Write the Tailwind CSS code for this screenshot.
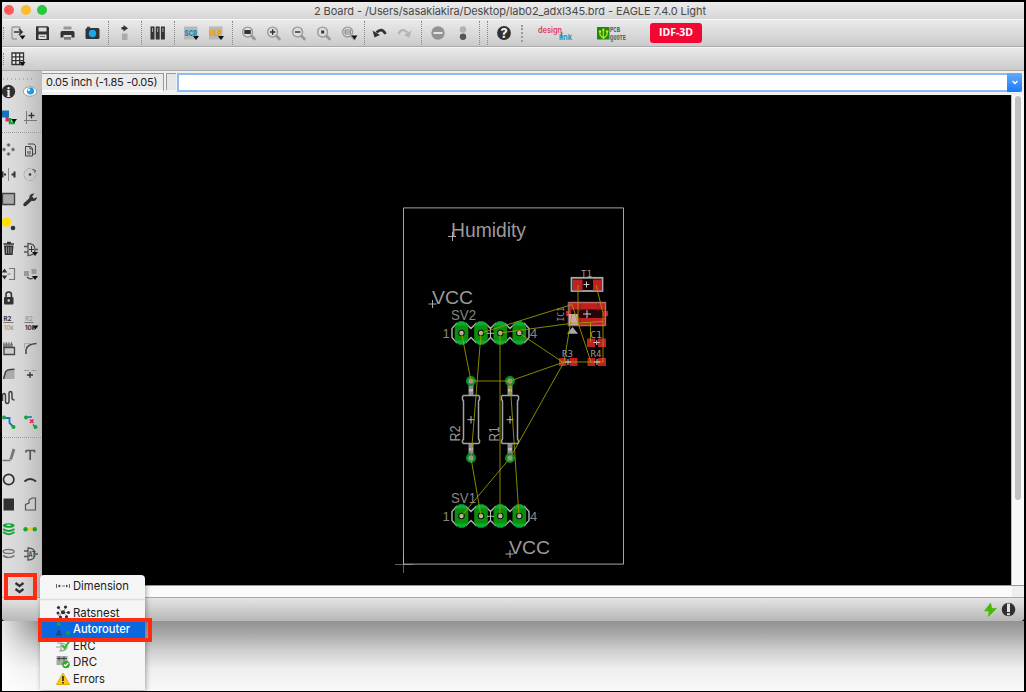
<!DOCTYPE html>
<html lang="en">
<head>
<meta charset="utf-8">
<title>2 Board - EAGLE 7.4.0 Light</title>
<script src="https://cdn.jsdelivr.net/npm/@tailwindcss/browser@4"></script>
</head>
<body class="w-[1026px] h-[692px] overflow-hidden bg-black font-['Inter',sans-serif]">
<svg class="hidden">
  <defs>
    <symbol id="lens" viewBox="0 0 16 16" overflow="visible"><circle cx="6.500" cy="6.500" r="5.300" fill="#dedede" stroke="#999" stroke-width="1.500"/><path d="M11 11l2.800 2.800" stroke="#999" stroke-width="3" stroke-linecap="round"/></symbol>
    <symbol id="arrow" viewBox="0 0 6 4" overflow="visible"><path d="M0 0h6L3 4z" fill="#111"/></symbol>
    <symbol id="pad" viewBox="-8 -12 16 24" overflow="visible"><path d="M-2.500-11.500h5L6.800-7V7L2.500 11.500h-5L-6.800 7V-7z" fill="#0b8f0b"/><path d="M-2.500-11.500h5L6.800-7.500H-6.800zM-2.500 11.500h5L6.800 7.500H-6.800z" fill="#08ad35"/><circle r="3.300" fill="#111"/><circle r="2.200" fill="#c3b8b0"/></symbol>
    <symbol id="hdr" viewBox="0 0 80 24" overflow="visible">
      <path d="M4.500 2.500h9.500l5 5 5-5h9.500l5 5 5-5H53l5 5 5-5h9.500L77 7.500v9L72.500 21.500H63l-5-5-5 5H43.500l-5-5-5 5H24l-5-5-5 5H4.500L0 16.500v-9z" fill="none" stroke="#b0b0b0" stroke-width="1.400"/>
      <use href="#pad" x="1.500" y="0" width="16" height="24"/><use href="#pad" x="21" y="0" width="16" height="24"/><use href="#pad" x="40.300" y="0" width="16" height="24"/><use href="#pad" x="59.300" y="0" width="16" height="24"/>
      <path d="M35 12.300h7M38.500 8v8" stroke="#bbb"/>
    </symbol>
    <symbol id="res" viewBox="0 0 20 90" overflow="visible">
      <path d="M10 8v12M10 69v10" stroke="#8c8c8c" stroke-width="5"/>
      <circle cx="10" cy="6" r="3.800" fill="#999" stroke="#078f25" stroke-width="2.400"/><circle cx="10" cy="83" r="3.800" fill="#999" stroke="#078f25" stroke-width="2.400"/>
      <path d="M10 14v2.500M10 73v2.500" stroke="#bbb" stroke-width="4"/>
      <path d="M2.500 20.500h15l1 1v3l-1 1.500v38l1 1.500v2l-1 1h-15l-1-1v-2l1-1.500v-38l-1-1.500v-3z" fill="none" stroke="#a2a2a2" stroke-width="1.500"/>
      <path d="M6.500 44.700h7M10 41v7.500" stroke="#bbb"/>
    </symbol>
  </defs>
</svg>

<main class="relative ml-[2px] flex h-[691px] w-[1022px] flex-col bg-black pt-[2px]">
  <header class="flex h-[17px] shrink-0 items-center bg-gradient-to-b from-[#ececec] to-[#d6d6d6] pl-[2px]">
    <div class="-mt-px flex gap-[6.500px]">
      <i class="size-[10px] rounded-full bg-[#fc5b57]"></i><i class="size-[10px] rounded-full bg-[#fdbc2e]"></i><i class="size-[10px] rounded-full bg-[#28c83f]"></i>
    </div>
    <h1 class="ml-[266px]"><svg width="398" height="16" class="block"><text x="1" y="11.500" font-size="11" textLength="392" fill="#484848">2 Board - /Users/sasakiakira/Desktop/lab02_adxl345.brd - EAGLE 7.4.0 Light</text></svg></h1>
  </header>

  <nav class="flex h-[28px] shrink-0 items-center border-t border-b border-t-[#f6f6f6] border-b-[#a9a9a9] bg-gradient-to-b from-[#eaeaea] to-[#cbcbcb]">
    <span class="ml-px mr-px h-3 w-px border-l border-dotted border-[#888]"></span>
    <svg class="w-[25px] h-4" viewBox="0 0 25 16"><path d="M15 5V3q0-1-1-1H8Q7 2 7 3v10q0 1 1 1h4" fill="none" stroke="#999" stroke-width="1.300"/><path d="M9 7h8M14 4l3 3-3 3" fill="none" stroke="#333" stroke-width="1.700"/><use href="#arrow" x="14.500" y="10.500" width="6" height="4"/></svg>
    <svg class="w-[25px] h-4" viewBox="0 0 25 16"><path d="M6 2q0-.7.700-.7h11l1.300 1.200V15H6z" fill="#333"/><path d="M8.500 2.500h8v4h-8zM8.500 9.500h8V14h-8z" fill="#ddd"/><path d="M10 11.500h5" stroke="#777"/></svg>
    <svg class="w-[25px] h-4" viewBox="0 0 25 16"><path d="M8.500 1.500h8v3h-8z" fill="#999"/><path d="M7 6h11q1.500 0 1.500 2v4.500h-3V10h-8v2.500h-3V8Q5.500 6 7 6z" fill="#333"/><path d="M9 12h7v2.700H9z" fill="#777"/></svg>
    <svg class="w-[25px] h-4" viewBox="0 0 25 16"><rect x="5.500" y="3" width="14" height="11" rx="1.500" fill="#30343a"/><path d="M7 1.700h3V4H7z" fill="#444"/><circle cx="12.500" cy="8.500" r="3.700" fill="#19a8ea"/></svg>
    <span class="mx-[3px] h-6 border-l border-dotted border-[#888]"></span>
    <svg class="w-[25px] h-4" viewBox="0 0 25 16"><path d="M10 8.500h5.500V15H10z" fill="#aaa"/><path d="M11.500 0l4.500 3.200-4.500 3.300V4.500H9.500V2h2z" fill="#333"/></svg>
    <span class="ml-[4px] mr-[3px] h-6 border-l border-dotted border-[#888]"></span>
    <svg class="w-[25px] h-4" viewBox="0 0 25 16"><g fill="#333"><rect x="5.500" y="1.500" width="4" height="13"/><rect x="10.700" y="1.500" width="4" height="13"/><rect x="15.900" y="1.500" width="4" height="13"/></g><path d="M7.500 3v4M12.700 3v4M17.900 3v4" stroke="#aaa"/></svg>
    <span class="ml-[4px] mr-[3px] h-6 border-l border-dotted border-[#888]"></span>
    <svg class="w-[25px] h-4" viewBox="0 0 25 16"><path d="M6 1.500h13.500v13H6z" fill="#b8b8b8"/><text x="6.500" y="11" font-size="8" font-weight="800" textLength="12.500" lengthAdjust="spacingAndGlyphs" fill="#1785bd">SCR</text><use href="#arrow" x="15" y="11" width="6" height="4"/></svg>
    <svg class="w-[25px] h-4" viewBox="0 0 25 16"><path d="M6 1.500h13.500v13H6z" fill="#b8b8b8"/><text x="6.500" y="11" font-size="8" font-weight="800" textLength="12.500" lengthAdjust="spacingAndGlyphs" fill="#f7960c">ULP</text><use href="#arrow" x="15" y="11" width="6" height="4"/></svg>
    <span class="ml-[4px] mr-[3px] h-6 border-l border-dotted border-[#888]"></span>
    <svg class="w-[25px] h-4" viewBox="0 0 25 16"><use href="#lens" x="5.500" y="1" width="15" height="15"/><path d="M8.300 5h6.500v4H8.300z" fill="#333"/></svg>
    <svg class="w-[25px] h-4" viewBox="0 0 25 16"><use href="#lens" x="5.500" y="1" width="15" height="15"/><path d="M9 7h5.400M11.700 4.300v5.400" stroke="#333" stroke-width="1.500"/></svg>
    <svg class="w-[25px] h-4" viewBox="0 0 25 16"><use href="#lens" x="5.500" y="1" width="15" height="15"/><path d="M9 7h5.400" stroke="#333" stroke-width="1.500"/></svg>
    <svg class="w-[25px] h-4" viewBox="0 0 25 16"><use href="#lens" x="5.500" y="1" width="15" height="15"/><path d="M10.200 5.500h3v3h-3z" fill="#333"/></svg>
    <svg class="w-[25px] h-4" viewBox="0 0 25 16"><use href="#lens" x="5.500" y="1" width="15" height="15"/><path d="M9 5h5.500v4H9zM9 7h5.500" fill="none" stroke="#888"/><use href="#arrow" x="15.500" y="10.500" width="6" height="4"/></svg>
    <span class="ml-[3px] mr-[2px] h-6 border-l border-dotted border-[#888]"></span>
    <svg class="w-[25px] h-4" viewBox="0 0 25 16"><path d="M9.500 7.500Q15 2 18.500 9" fill="none" stroke="#333" stroke-width="2.600"/><path d="M5.500 5.500l2 7 5.500-2.500z" fill="#333"/></svg>
    <svg class="w-[25px] h-4" viewBox="0 0 25 16"><path d="M15.500 7.500Q10 2 6.500 9" fill="none" stroke="#b4b4b4" stroke-width="2.300"/><path d="M19.500 5.500l-2 7L12 10z" fill="#b4b4b4"/></svg>
    <span class="ml-[4px] mr-[3px] h-6 border-l border-dotted border-[#888]"></span>
    <svg class="w-[25px] h-4" viewBox="0 0 25 16"><circle cx="13" cy="8" r="6.700" fill="#929292"/><path d="M8.500 8h9" stroke="#eee" stroke-width="1.800"/></svg>
    <svg class="w-[25px] h-4" viewBox="0 0 25 16"><circle cx="13" cy="4.500" r="3.200" fill="#b2b2b2"/><circle cx="13" cy="11.700" r="3.200" fill="#555"/></svg>
    <span class="ml-[4px] h-6 border-l border-dotted border-[#888]"></span>
    <span class="ml-[7px] mr-[3px] h-6 border-l border-dotted border-[#888]"></span>
    <svg class="w-[25px] h-4" viewBox="0 0 25 16"><circle cx="13" cy="8" r="6.900" fill="#303030"/><text x="13" y="12.500" text-anchor="middle" font-size="12.500" font-weight="800" fill="#eee">?</text></svg>
    <span class="ml-[5px] h-[17px] border-l-2 border-dotted border-[#999]"></span>
    <svg class="ml-[14px] h-5 w-[36px]" viewBox="0 0 36 20"><text x="1" y="9.500" font-size="8.500" font-weight="600" textLength="24" lengthAdjust="spacingAndGlyphs" fill="#df3d62">design</text><text x="22" y="17" font-size="7.500" font-weight="700" textLength="13" lengthAdjust="spacingAndGlyphs" fill="#2a95bd">link</text><path d="M24.500 9v6" stroke="#df3d62" stroke-width="1.200"/></svg>
    <svg class="ml-[23px] h-5 w-[31px]" viewBox="0 0 31 20"><rect x="1" y="4" width="12.500" height="12.500" fill="#178c12"/><path d="M7.300 7v9M4 8v4l3 3M11 8v4l-3 3" fill="none" stroke="#c6e010" stroke-width="1.200"/><circle cx="4" cy="8.500" r="1.300" fill="#c6e010"/><circle cx="7.300" cy="6.800" r="1.300" fill="#c6e010"/><circle cx="11" cy="8.500" r="1.300" fill="#c6e010"/><text x="14" y="9" font-size="6.500" font-family="Liberation Mono" font-weight="700" textLength="10" lengthAdjust="spacingAndGlyphs" fill="#555">PCB</text><text x="14" y="16.500" font-size="6.500" font-family="Liberation Mono" font-weight="700" textLength="16" lengthAdjust="spacingAndGlyphs" fill="#555">QUOTE</text></svg>
    <div class="ml-[23px] flex h-5 w-[52px] items-center justify-center rounded-[3px] bg-[#f20832] font-['Open_Sans',sans-serif] text-[10.500px] font-bold text-white">IDF-3D</div>
  </nav>

  <div class="flex h-[24px] shrink-0 items-center border-t border-b border-t-[#f6f6f6] border-b-[#aaa] bg-gradient-to-b from-[#eaeaea] to-[#cbcbcb]">
    <span class="ml-px mr-[6px] h-3 w-px border-l border-dotted border-[#888]"></span>
    <svg class="h-4 w-5" viewBox="0 0 20 16"><path d="M2 2h11.500v11.500H2zM5.800 2v11.500M9.700 2v11.500M2 5.800h11.500M2 9.700h11.500" fill="#eee" stroke="#333" stroke-width="1.300"/><use href="#arrow" x="9.500" y="11" width="6" height="4"/></svg>
  </div>

  <div class="flex h-[526px] shrink-0">
    <aside class="flex w-10 shrink-0 flex-col overflow-hidden bg-gradient-to-r from-[#dedede] via-[#d6d6d6] to-[#bdbdbd]">
      <svg width="40" height="526" viewBox="2 71 40 526" fill="none">
        <path d="M3 79h32" stroke="#888" stroke-dasharray="1 3"/>
        <circle cx="8.500" cy="91.500" r="6.700" fill="#303030"/><text x="8.500" y="96.500" text-anchor="middle" font-family="Liberation Serif" font-size="14" font-weight="700" fill="#eee">i</text>
        <ellipse cx="30" cy="91.500" rx="6.600" ry="4.700" fill="#fff" stroke="#999"/><circle cx="30.500" cy="91" r="3.600" fill="#159ee0"/><circle cx="28.800" cy="89.700" r="1.300" fill="#fff"/>
        <path d="M7 115v5h4" stroke="#eb2050" stroke-width="3"/><path d="M10 118v5h5" stroke="#15a33c" stroke-width="2.500"/><path d="M2 110.500h7v7H2z" fill="#1771bd"/><use href="#arrow" x="11" y="119" width="6" height="4"/>
        <path d="M26.500 111v13M24 120.500h13" stroke="#777"/><path d="M31.500 112.500v6M28.500 115.500h6" stroke="#333" stroke-width="1.300"/>
        <path d="M2 132.500h39M2 437.500h39" stroke="#999" stroke-dasharray="1 1"/>
        <path d="M8.500 143.500v3M8.500 152.500v3M2.500 149.500h3M11.500 149.500h3" stroke="#555" stroke-width="2"/><path d="M6.500 145h4M6.500 154h4M4 147.500v4M13 147.500v4" stroke="#666" stroke-width=".9"/>
        <path d="M28 144h6l1.500 1.500V154H33" stroke="#444"/><path d="M25.500 146.500h5l2 2v7.500h-7z" stroke="#444"/><path d="M27 151h4v3.500h-4z" fill="#888"/><path d="M30 146.500v2.500h2.500" stroke="#444"/>
        <path d="M8.500 168v13" stroke="#888"/><path d="M2.500 171.500v6M4 174.500h2M14.500 171.500v6M11.500 174.500h2" stroke="#333" stroke-width="2"/>
        <circle cx="30" cy="174.500" r="6" stroke="#aaa" stroke-dasharray="5 1"/><circle cx="30" cy="174.500" r="1.300" fill="#333"/><path d="M32.500 169.500l3 1-1 2" stroke="#444"/>
        <path d="M2.500 193.500h12v11h-12z" fill="#aaa" stroke="#444" stroke-width="1.400"/>
        <path d="M25 204.500l6-5.500" stroke="#333" stroke-width="3.500" stroke-linecap="round"/><path d="M34.500 193.500q-4-.5-5 2.500-1 4 3 5 4 .5 4.500-4l-3 1.500-2-2z" fill="#333"/>
        <circle cx="6.500" cy="222" r="4.800" fill="#ffe000"/><circle cx="13" cy="228" r="2.300" fill="#333"/>
        <path d="M4 245.500h9.500l-.8 9.500H4.800z" fill="#333"/><path d="M3.500 244h10.500M7 242.500h4" stroke="#333" stroke-width="1.500"/><path d="M6.500 247v6.500M8.700 247v6.500M11 247v6.500" stroke="#aaa" stroke-width=".8"/>
        <g id="gate"><path d="M28 243.500v12q7 0 7-6t-7-6zM24 246.500h4M24 252h4M35 249.500h3" stroke="#555" stroke-width="1.300"/></g><path d="M31.500 246v6M29 249.500h5" stroke="#333"/><use href="#arrow" x="32" y="252" width="6" height="4"/>
        <path d="M4.500 268.500l2.800 4H1.700zM4.500 279.500l2.800-4H1.700z" fill="#333"/><path d="M9 268.500h5.500v11H9" stroke="#777" stroke-width="1.200"/><path d="M7.500 274h3" stroke="#777"/>
        <path d="M24 271h5v5h-5zM31.500 269h5v5h-5z" fill="#999"/><path d="M27 277q3 3 6 1" stroke="#444" stroke-width="1.200"/><use href="#arrow" x="32" y="276" width="6" height="4"/>
        <rect x="4" y="297" width="9.500" height="7.500" rx="1" fill="#333"/><path d="M6 297v-2.500q0-2.500 2.700-2.500t2.700 2.500v2.500" stroke="#333" stroke-width="1.600"/><circle cx="8.700" cy="300.500" r="1.200" fill="#ddd"/>
        <g font-size="6.500" font-weight="700"><text x="3.500" y="320.500" textLength="8" lengthAdjust="spacingAndGlyphs" fill="#333">R2</text><text x="3.500" y="329.500" textLength="10.500" lengthAdjust="spacingAndGlyphs" font-weight="400" fill="#888">10k</text><text x="25" y="320.500" textLength="8" lengthAdjust="spacingAndGlyphs" fill="#888" font-weight="400">R2</text><text x="25" y="329.500" textLength="10" lengthAdjust="spacingAndGlyphs" fill="#333">10k</text></g><path d="M3.500 322.500h10M24.500 322.500h9" stroke="#777"/><use href="#arrow" x="32.500" y="325.500" width="6" height="4"/>
        <path d="M3 343.500h10v5H3z" fill="#888"/><path d="M4 342v8M6.500 342v8M9 342v8M11.500 342v3" stroke="#777"/><path d="M4 347.500h10.500v7H4z" fill="#ccc" stroke="#444" stroke-width="1.300"/>
        <path d="M26 354V350q1-6 10.500-6.500" stroke="#444" stroke-width="1.500"/><path d="M24 343.500h8M24.500 343v5" stroke="#aaa"/>
        <path d="M3.500 379l2.500-8q.5-1.500 8.500-2v10" fill="#aaa"/><path d="M3.500 379l2-7q.8-2.800 9-2.800" stroke="#444" stroke-width="1.500"/>
        <path d="M24 370.500h5M31.500 370.500h5" stroke="#999" stroke-width="1.200"/><path d="M30 372v6M27 375h6" stroke="#333" stroke-width="1.300"/>
        <path d="M2.500 401v-5q0-2.500 1.500-2.500t1.500 2.500v5q0 2.500 1.700 2.500T9 401v-7q0-2.500 1.500-2.500T12 394v4q0 2 2.500 2" stroke="#444" stroke-width="1.500"/>
        <path d="M4 418h5.500v5l4 4" stroke="#1771bd" stroke-width="1.800"/><circle cx="4" cy="417.500" r="2" fill="#14a538"/><circle cx="13.500" cy="427" r="2" fill="#14a538"/>
        <path d="M26 417h6M33 424.500l2.500 2.500" stroke="#1771bd" stroke-width="1.500"/><circle cx="26" cy="417.500" r="2" fill="#14a538"/><circle cx="35.500" cy="427" r="2" fill="#14a538"/><path d="M30 419.500l3.500 3.500M33.500 419.500l-3.500 3.500" stroke="#e5253d" stroke-width="1.500"/>
        <path d="M2.500 460.500h8" stroke="#777" stroke-width="1.500"/><path d="M14 449l-2.500 8-1 2.500" stroke="#777" stroke-width="2.800"/>
        <path d="M26 450.500h8.500v2M30.200 450.500v9.500M26 450.500v2" stroke="#555" stroke-width="1.700"/>
        <circle cx="8.700" cy="479.500" r="5.200" stroke="#333" stroke-width="1.700"/><path d="M24.500 481.500q5.500-5 11.500 0" stroke="#333" stroke-width="2"/>
        <path d="M3.500 498.500h10.500v12H3.500z" fill="#303030"/><path d="M25.500 510v-5.500l3.500-1.500v-3l3-2h3.500v12z" stroke="#555" stroke-width="1.200"/>
        <ellipse cx="8.700" cy="525.500" rx="5.800" ry="2.300" fill="#14a538"/><path d="M3 529q5.500 4 11.500 0M3 532q5.500 4.500 11.500 0" stroke="#14a538" stroke-width="1.800"/><ellipse cx="8.700" cy="525.300" rx="2.500" ry=".8" fill="#ddd"/>
        <path d="M26 529.200h8" stroke="#ffc400" stroke-width="2"/><circle cx="25.500" cy="529.200" r="2.200" fill="#14a538"/><circle cx="34.800" cy="529.200" r="2.200" fill="#14a538"/>
        <ellipse cx="8.700" cy="551.500" rx="5.500" ry="2" stroke="#777" stroke-width="1.300"/><path d="M3 555.500q5.500 4 11.500 0" stroke="#777" stroke-width="1.600"/>
        <use href="#gate" y="304.500"/><text x="28.500" y="557" font-size="7" font-weight="700" textLength="7" lengthAdjust="spacingAndGlyphs" fill="#444">AT</text>
        <path d="M15.500 583l4 3 4-3M15.500 589l4 3 4-3" stroke="#333" stroke-width="2.200"/>
      </svg>
    </aside>

    <section class="flex w-[982px] flex-col bg-[#f0f0f0]">
      <div class="flex h-6 shrink-0 items-start pt-[2px]">
        <div class="h-[19px] w-[122px] border-t border-r border-b-2 border-t-[#999] border-r-[#999] border-b-white bg-[#ebebeb]"><svg width="120" height="17" class="block"><text x="4" y="12.300" font-size="11" textLength="111.500" fill="#222">0.05 inch (-1.85 -0.05)</text></svg></div>
        <div class="ml-[2px] h-[17px] w-[10px] border-t border-l border-[#999] bg-[#e6e6e6]"></div>
        <div class="ml-px flex h-[19px] w-[845px] border-2 border-r-0 border-[#8fbcf0] bg-white"><div class="flex-1"></div>
          <div class="-my-[2px] flex w-[15px] items-center justify-center rounded-r-[3px] bg-gradient-to-b from-[#62abf7] to-[#1379fb]"><svg width="8" height="5" viewBox="0 0 8 5"><path d="M1.500 1L4 3.500 6.500 1" fill="none" stroke="#fff" stroke-width="1.400"/></svg></div></div>
      </div>
      <div class="flex h-[490px] shrink-0">
        <svg width="969" height="490" viewBox="42 95 969 490" class="block shrink-0 bg-black" fill="none" font-family="Liberation Sans">
          <path d="M403.500 207.900h220v356.200h-220z" stroke="#a5a5a5"/>
          <path d="M395.500 564.500h17M403.500 555.500v17" stroke="#bbb" stroke-dasharray="1 1"/>
          <g fill="#9b9b9b">
            <text x="451" y="236.500" font-size="20" textLength="75" lengthAdjust="spacingAndGlyphs">Humidity</text>
            <text x="432" y="303.500" font-size="19" textLength="41" lengthAdjust="spacingAndGlyphs">VCC</text>
            <text x="509" y="553.500" font-size="19" textLength="41" lengthAdjust="spacingAndGlyphs">VCC</text>
          </g>
          <path d="M448 236.500h8M452.500 232v9M428.500 304h8M432.500 300v8M505.500 554h8M510 550v8" stroke="#aaa"/>
          <g fill="#858585" font-size="14">
            <text x="451" y="319.500" textLength="25" lengthAdjust="spacingAndGlyphs">SV2</text><text x="451" y="502.500" textLength="25" lengthAdjust="spacingAndGlyphs">SV1</text>
            <text x="442.500" y="338" font-size="13">1</text><text x="530" y="338" font-size="13">4</text><text x="442.500" y="520.500" font-size="13">1</text><text x="530" y="520.500" font-size="13">4</text>
            <text transform="translate(460 441.500) rotate(-90)" textLength="16" lengthAdjust="spacingAndGlyphs" fill="#999">R2</text><text transform="translate(498.500 441.500) rotate(-90)" textLength="15" lengthAdjust="spacingAndGlyphs" fill="#999">R1</text>
          </g>
          <use href="#hdr" x="452" y="321" width="80" height="24"/><use href="#hdr" x="452" y="504" width="80" height="24"/>
          <use href="#res" x="461" y="375" width="20" height="90"/><use href="#res" x="500" y="375" width="20" height="90"/>
          <g fill="#c02020">
            <rect x="571.500" y="277.800" width="31" height="13.200" fill="#160303" stroke="#aaa" stroke-width="1.800"/><path d="M573 279.500h9.500v11H573zM593 279.500h9v11h-9z"/>
            <path d="M569 302h37v23.500h-37z"/><path d="M571 309.500h33v8.500h-33z" fill="#260606"/><path d="M566 311h5v5h-5zM603 311h5v5h-5z"/>
            <path d="M580 302v9M598 302v9M580 317v8" stroke="#8a2020"/>
            <rect x="568.500" y="302.500" width="37" height="23" fill="none" stroke="#c08080" stroke-width="1.500" opacity=".75"/>
            <path d="M569 314h9v11h-9z" fill="#c9aaa5"/><path d="M572.500 327l5.500 6.800h-11z" fill="#aaa"/>
            <path d="M587 338.500h8v8.500h-8zM598 338.500h8v8.500h-8zM559 358h7.500v8H559zM569.500 358h8v8h-8zM587.500 358h7.500v8h-7.500zM598 358h8v8h-8z"/>
          </g>
          <g font-family="DejaVu Sans Mono" font-size="9.500" fill="#999">
            <text x="581" y="276.500" textLength="11" lengthAdjust="spacingAndGlyphs">T1</text><text x="590" y="338" textLength="12" lengthAdjust="spacingAndGlyphs">C1</text><text x="562" y="357" textLength="11" lengthAdjust="spacingAndGlyphs">R3</text><text x="590.500" y="357" textLength="11" lengthAdjust="spacingAndGlyphs">R4</text><text transform="translate(564 321.500) rotate(-90)" textLength="14.500" lengthAdjust="spacingAndGlyphs">IC1</text>
          </g>
          <g stroke="#a0a000" stroke-opacity=".85">
            <path d="M461.500 333L471 381M481 333L471 458M500 333V516M519 333L564 363M481 333L572 304.500 591 362M500 333L570 323.500 603 321.500M471 381H510L564 362 510 458 461.500 516M471 458L481 516M510 381L519 516M578 285V322M596 285L603 313V362H564L572 314M590.500 322V342"/>
          </g>
          <path d="M583.500 284.500h6M586.500 281.500v6M583 314h8M587 310v8M593.500 342.500h6M596.700 340v5M565 362h6M568 359v6M594 362h6M597 359v6" stroke="#ccc"/>
        </svg>
        <div class="w-[13px] border-l border-[#bbb] bg-[#f8f8f8] pl-[3px] pt-px"><div class="h-[404px] w-[6px] rounded-full bg-[#c1c1c1]"></div></div>
      </div>
      <div class="h-3 shrink-0 border-t border-[#999] bg-[#fafafa] pl-[970px]"><div class="h-full bg-[#eee]"></div></div>
    </section>
  </div>

  <footer class="flex h-6 shrink-0 items-center justify-end gap-[4px] rounded-b-[3px] border-t border-[#aaa] bg-gradient-to-b from-[#e4e4e4] to-[#b7b7b7] pr-2">
    <svg width="14" height="16" viewBox="0 0 14 16"><path d="M7.500 1L1.500 9H6l-.5 5.500 8-8H9z" fill="#47b80b" stroke="#47b80b" stroke-width=".6"/></svg>
    <svg width="15" height="16" viewBox="0 0 15 16"><circle cx="7.500" cy="7.500" r="6.800" fill="#303030"/><path d="M6 1.500h3v8.500H6zM6 11.300h3v2H6z" fill="#e2e2e2"/></svg>
  </footer>
  <div class="flex h-[70px] shrink-0 bg-[linear-gradient(#929292,#a7a7a7_18%,#d0d0d0_43%,#eeeeee_68%,#f9f9f9)]">
    <div class="h-[69px] w-[146px] bg-[linear-gradient(to_right,rgba(255,255,255,.75),rgba(255,255,255,0)_38px)]"></div>
  </div>

  <div class="absolute left-[38px] top-[575px] flex h-[115px] w-[105px] flex-col overflow-hidden rounded-t-[4px] bg-[#f5f5f5] text-[12px] shadow-[1px_1px_5px_rgba(0,0,0,.35)]">
    <svg width="105" height="115" viewBox="40 575 105 115" class="block">
      <path d="M40 599.500h105" stroke="#dedede" stroke-width="1.500"/><path d="M40 621h105v17H40z" fill="#0968de"/>
      <g font-size="12" fill="#202020"><text x="73" y="590" textLength="56" lengthAdjust="spacingAndGlyphs">Dimension</text><text x="73" y="616.500" textLength="46.500" lengthAdjust="spacingAndGlyphs">Ratsnest</text><text x="73" y="633" textLength="57" lengthAdjust="spacingAndGlyphs" fill="#fff" font-weight="500">Autorouter</text><text x="73" y="650" textLength="22.500" lengthAdjust="spacingAndGlyphs">ERC</text><text x="73" y="666" textLength="24" lengthAdjust="spacingAndGlyphs">DRC</text><text x="73" y="682.500" textLength="32" lengthAdjust="spacingAndGlyphs">Errors</text></g>
      <path d="M56.500 584v4M69.500 584v4" stroke="#666"/><path d="M58 586h10" stroke="#777" stroke-dasharray="3 1"/><path d="M58 586l2-1.500v3zM68 586l-2-1.500v3z" fill="#444"/>
      <path d="M58 608l5 4.500 5 4M58 616l5-3.500 3-5M63 612.500h6" stroke="#999" fill="none"/><g fill="#303030"><circle cx="63" cy="612.300" r="2"/><circle cx="58.500" cy="607.500" r="1.600"/><circle cx="65.500" cy="607" r="1.600"/><circle cx="58" cy="613" r="1.500"/><circle cx="68.500" cy="612.500" r="1.600"/><circle cx="60.500" cy="617" r="1.600"/><circle cx="66.500" cy="616.800" r="1.600"/></g>
      <circle cx="58.500" cy="624" r="2" fill="#14a538"/><circle cx="68" cy="633" r="2" fill="#14a538"/><path d="M60 625l7 7" stroke="#168888" stroke-dasharray="2 1"/><text x="56" y="636" font-size="8" font-weight="700" fill="#244066">A</text>
      <path d="M57 643h4q6 1 6 4t-6 4h-2M56 647h4M61 643v8" stroke="#999" stroke-width="1.200" fill="none"/><path d="M62 645l2.500 3 5-7" stroke="#32b82a" stroke-width="2" fill="none"/>
      <path d="M56.500 656h11v9h-11z" fill="#aaa"/><path d="M57 658.500h10M59 656.500v4M64 656.500v4" stroke="#444"/><circle cx="66" cy="664.500" r="3.800" fill="#32a928"/><path d="M64 664.500l1.500 1.500 2.700-3" stroke="#fff" stroke-width="1.200" fill="none"/>
      <path d="M63 673l6.500 11.500h-13z" fill="#ffc71c" stroke="#e6a900" stroke-linejoin="round"/><path d="M63 676v5M63 682v1.500" stroke="#222" stroke-width="1.600"/>
    </svg>
  </div>
  <div class="absolute left-[2px] top-[573px] h-[27px] w-[33px] border-4 border-[#ff2a10]"></div>
  <div class="absolute left-[36px] top-[618px] h-6 w-[114px] border-4 border-[#ff2a10]"></div>
</main>
</body>
</html>
